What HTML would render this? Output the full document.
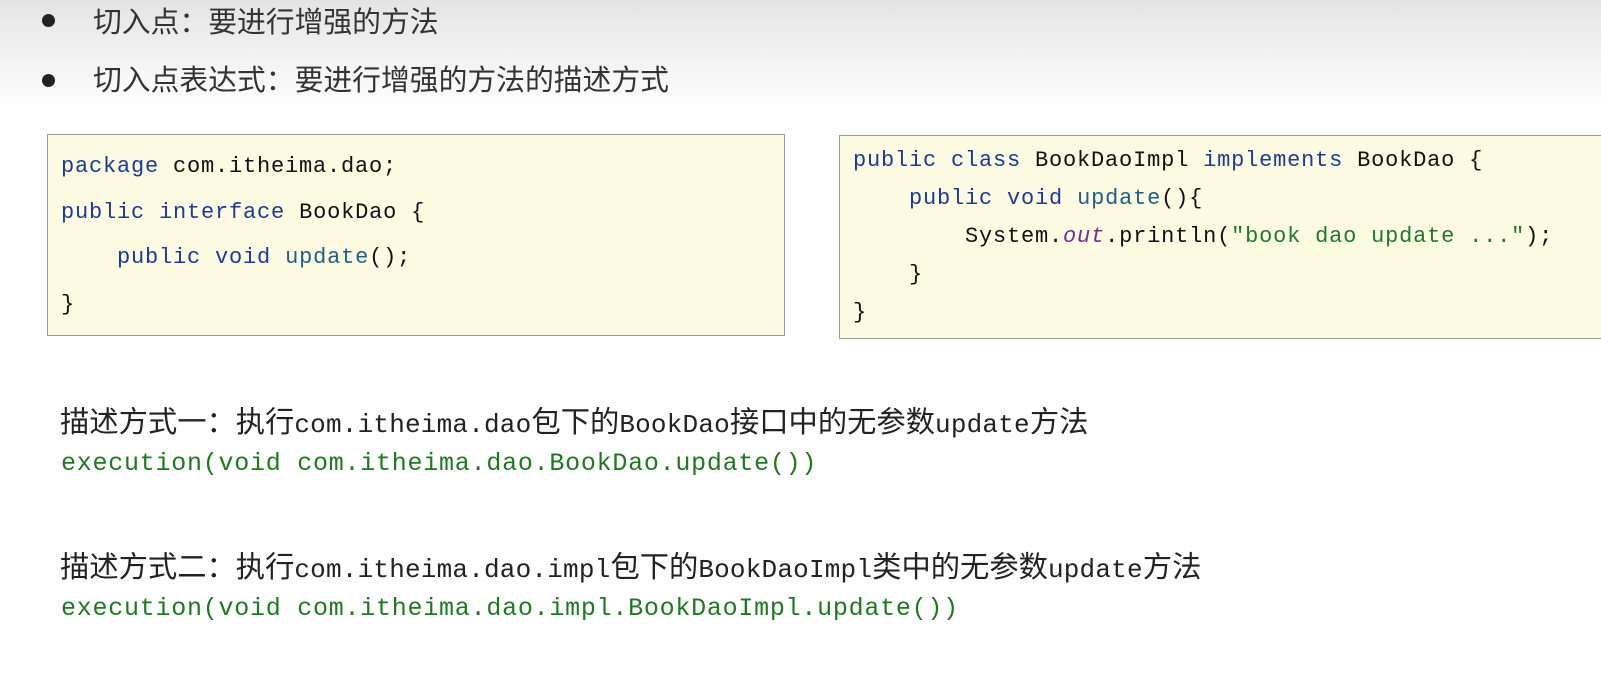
<!DOCTYPE html>
<html><head><meta charset="utf-8"><style>
body{margin:0;width:1601px;height:697px;overflow:hidden;background:#fff;position:relative;font-family:"Liberation Sans","Noto Sans CJK SC",sans-serif}
.hdr{position:absolute;left:0;top:0;width:1601px;height:110px;background:linear-gradient(#e4e4e4,#ffffff)}
.b{position:absolute;font-size:28.8px;line-height:40px;color:#333;white-space:nowrap}
.dot{position:absolute;width:13px;height:13px;border-radius:50%;background:#222}
.box{position:absolute;background:#fefbe3;border:1px solid #9a9a9a;box-sizing:border-box}
.c{position:absolute;font-family:"Liberation Mono",monospace;font-size:22px;letter-spacing:0.8px;white-space:pre;color:#111;line-height:30px}
.k{color:#1b3a9a}.m{color:#1f5f7f}.s{color:#1e7a2e}.o{color:#7a2a8a;font-style:italic}
.t{position:absolute;font-size:29.3px;line-height:36px;color:#222;white-space:nowrap;font-family:"Noto Sans CJK SC",sans-serif}
.t i{font-style:normal;font-family:"Liberation Mono",monospace;font-size:26px;letter-spacing:0.2px}
.g{position:absolute;font-family:"Liberation Mono",monospace;font-size:25px;letter-spacing:0.75px;color:#1e7a1e;white-space:pre}
</style></head><body>
<div class="hdr"></div>
<div class="dot" style="left:42px;top:14px"></div>
<div class="b" style="left:93px;top:3px">切入点：要进行增强的方法</div>
<div class="dot" style="left:42px;top:74px"></div>
<div class="b" style="left:93px;top:61px">切入点表达式：要进行增强的方法的描述方式</div>

<div class="box" style="left:47px;top:134px;width:738px;height:202px"></div>
<div class="c" style="left:61px;top:152px"><span class="k">package</span> com.itheima.dao;</div>
<div class="c" style="left:61px;top:198px"><span class="k">public</span> <span class="k">interface</span> BookDao {</div>
<div class="c" style="left:61px;top:243px">    <span class="k">public</span> <span class="k">void</span> <span class="m">update</span>();</div>
<div class="c" style="left:61px;top:290px">}</div>

<div class="box" style="left:839px;top:135px;width:770px;height:204px"></div>
<div class="c" style="left:853px;top:146px"><span class="k">public</span> <span class="k">class</span> BookDaoImpl <span class="k">implements</span> BookDao {</div>
<div class="c" style="left:853px;top:184px">    <span class="k">public</span> <span class="k">void</span> <span class="m">update</span>(){</div>
<div class="c" style="left:853px;top:222px">        System.<span class="o">out</span>.println(<span class="s">"book dao update ..."</span>);</div>
<div class="c" style="left:853px;top:260px">    }</div>
<div class="c" style="left:853px;top:298px">}</div>

<div class="t" style="left:60px;top:402px">描述方式一：执行<i>com.itheima.dao</i>包下的<i>BookDao</i>接口中的无参数<i>update</i>方法</div>
<div class="g" style="left:61px;top:449px">execution(void com.itheima.dao.BookDao.update())</div>
<div class="t" style="left:60px;top:547px">描述方式二：执行<i>com.itheima.dao.impl</i>包下的<i>BookDaoImpl</i>类中的无参数<i>update</i>方法</div>
<div class="g" style="left:61px;top:594px">execution(void com.itheima.dao.impl.BookDaoImpl.update())</div>
</body></html>
